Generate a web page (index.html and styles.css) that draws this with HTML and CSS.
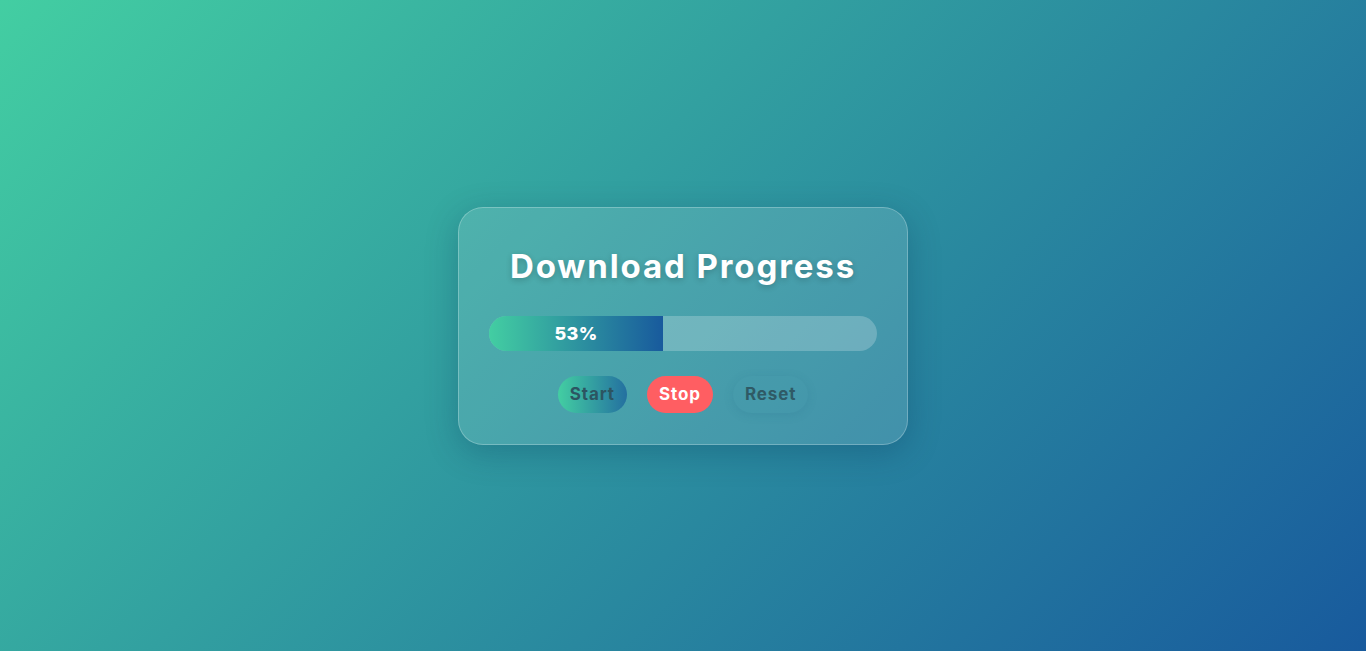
FILE: index.html
```html
<!DOCTYPE html>
<html lang="en">
<head>
<meta charset="utf-8">
<title>Download Progress</title>
<link rel="stylesheet" href="styles.css">
</head>
<body>
  <main class="card">
    <h1 class="title">Download Progress</h1>
    <div class="track">
      <div class="fill" style="width: 174px;">53%</div>
    </div>
    <div class="actions">
      <button class="btn btn-start">Start</button>
      <button class="btn btn-stop">Stop</button>
      <button class="btn btn-reset">Reset</button>
    </div>
  </main>
</body>
</html>
```
FILE: styles.css
```css
* { box-sizing: border-box; }
html, body { height: 100%; }
body {
  margin: 0;
  font-family: "Inter", "Open Sans", sans-serif;
  background: linear-gradient(135deg, #43cea2 0%, #185a9d 100%);
  display: flex;
  align-items: center;
  justify-content: center;
}
.card {
  width: 450px;
  padding: 39px 30px 31px;
  border-radius: 25px;
  background: rgba(255, 255, 255, 0.13);
  border: 1px solid rgba(255, 255, 255, 0.25);
  box-shadow: 0 8px 32px rgba(0, 40, 80, 0.25);
  text-align: center;
}
.title {
  margin: 0 0 31px;
  font-size: 33px;
  line-height: 38px;
  font-weight: 700;
  color: #fff;
  letter-spacing: 1.9px;
  text-shadow: 0 2px 6px rgba(0, 0, 0, 0.2);
}
.track {
  height: 35px;
  border-radius: 20px;
  background: rgba(255, 255, 255, 0.22);
  overflow: hidden;
  display: flex;
}
.fill {
  height: 100%;
  background: linear-gradient(90deg, #43cea2, #185a9d);
  color: #fff;
  font-weight: 800;
  font-size: 18px;
  letter-spacing: 0.3px;
  display: flex;
  align-items: center;
  justify-content: center;
}
.actions {
  margin-top: 25px;
  display: flex;
  justify-content: center;
  gap: 20px;
}
.btn {
  font-family: inherit;
  font-size: 17px;
  font-weight: 700;
  line-height: 21px;
  height: 37px;
  letter-spacing: 0.9px;
  padding: 8px 12px;
  border: none;
  border-radius: 20px;
  color: #2d5661;
  background: transparent;
}
.btn-start {
  background: linear-gradient(90deg, #43cea2, #2470a0);
  color: #2c5561;
}
.btn-stop {
  background: #ff5e62;
  color: #fff;
}
.btn-reset {
  color: #2f5a66;
  box-shadow: 0 2px 10px rgba(40, 110, 140, 0.2);
}
```
